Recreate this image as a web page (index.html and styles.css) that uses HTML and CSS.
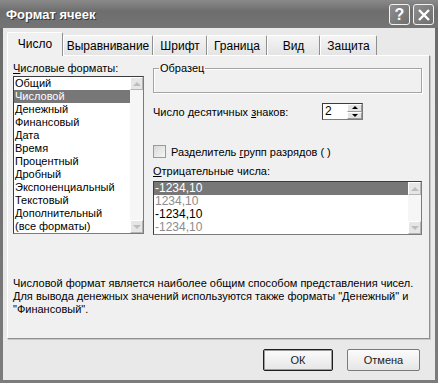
FILE: index.html
```html
<!DOCTYPE html>
<html lang="ru">
<head>
    <meta charset="UTF-8">
    <title>Формат ячеек</title>
    <link rel="stylesheet" href="styles.css">
</head>
<body>
    <div class="window">
        <div class="titlebar">
            <span class="title">Формат ячеек</span>
            <div class="title-buttons">
                <span class="tbtn">?</span>
                <span class="tbtn">
                    <svg width="14" height="14" viewBox="0 0 14 14"><path d="M2 2 L12 12 M12 2 L2 12" stroke="#fff" stroke-width="2.4" fill="none"/></svg>
                </span>
            </div>
        </div>
        <div class="dialog-body">
            <div class="tabs">
                <div class="tab active">Число</div>
                <div class="tab w-align">Выравнивание</div>
                <div class="tab w-font">Шрифт</div>
                <div class="tab w-border">Граница</div>
                <div class="tab w-view">Вид</div>
                <div class="tab w-protect">Защита</div>
            </div>
            <div class="panel">
                <div class="columns">
                    <div class="col-left">
                        <div class="label"><u>Ч</u>исловые форматы:</div>
                        <div class="listbox formats">
                            <ul class="items">
                                <li>Общий</li>
                                <li class="selected">Числовой</li>
                                <li>Денежный</li>
                                <li>Финансовый</li>
                                <li>Дата</li>
                                <li>Время</li>
                                <li>Процентный</li>
                                <li>Дробный</li>
                                <li>Экспоненциальный</li>
                                <li>Текстовый</li>
                                <li>Дополнительный</li>
                                <li>(все форматы)</li>
                            </ul>
                            <div class="scrollbar">
                                <span class="sb-btn"><span class="arrow up"></span></span>
                                <span class="sb-track"></span>
                                <span class="sb-btn"><span class="arrow down"></span></span>
                            </div>
                        </div>
                    </div>
                    <div class="col-right">
                        <fieldset class="sample">
                            <legend>Образец</legend>
                        </fieldset>
                        <div class="decimals">
                            <span>Число десятичных <u>з</u>наков:</span>
                            <div class="spin">
                                <span class="spin-value">2</span>
                                <div class="spin-buttons">
                                    <span class="spin-btn"><span class="tri up"></span></span>
                                    <span class="spin-btn"><span class="tri down"></span></span>
                                </div>
                            </div>
                        </div>
                        <div class="check-row">
                            <span class="checkbox"></span>
                            <span>Разделитель <u>г</u>рупп разрядов ( )</span>
                        </div>
                        <div class="label neg-label"><u>О</u>трицательные числа:</div>
                        <div class="listbox negatives">
                            <ul class="items">
                                <li class="selected">-1234,10</li>
                                <li class="dim">1234,10</li>
                                <li>-1234,10</li>
                                <li class="dim">-1234,10</li>
                            </ul>
                            <div class="scrollbar">
                                <span class="sb-btn"><span class="arrow up"></span></span>
                                <span class="sb-track"></span>
                                <span class="sb-btn"><span class="arrow down"></span></span>
                            </div>
                        </div>
                    </div>
                </div>
                <p class="description">Числовой формат является наиболее общим способом представления чисел.<br>Для вывода денежных значений используются также форматы "Денежный" и<br>"Финансовый".</p>
            </div>
            <div class="footer">
                <button class="btn default">ОК</button>
                <button class="btn cancel">Отмена</button>
            </div>
        </div>
    </div>
</body>
</html>
```

FILE: styles.css
```css
* {
    margin: 0;
    padding: 0;
    box-sizing: border-box;
}
body {
    font-family: 'Liberation Sans', Arial, sans-serif;
    font-size: 11px;
    color: #000;
    background: #fff;
}
.window {
    width: 438px;
    height: 383px;
    display: flex;
    flex-direction: column;
    background: linear-gradient(to bottom, #6a6a6a, #7c7c7c);
}
.titlebar {
    height: 28px;
    display: flex;
    align-items: center;
    justify-content: space-between;
    padding: 0 4px 0 6px;
    background: linear-gradient(to bottom, #8a8a8a 0%, #6e6e6e 40%, #747474 100%);
}
.title {
    color: #fff;
    font-weight: 700;
    font-size: 13px;
    text-shadow: 1px 1px 0 #333;
}
.title-buttons {
    display: flex;
    gap: 3px;
    margin-top: 1px;
}
.tbtn {
    width: 21px;
    height: 21px;
    border: 1px solid #f2f2f2;
    border-radius: 3px;
    background: linear-gradient(135deg, #8e8e8e, #6e6e6e);
    color: #fff;
    font-size: 16px;
    font-weight: 700;
    display: flex;
    align-items: center;
    justify-content: center;
}
.dialog-body {
    flex: 1;
    margin: 0 3px 3px;
    background: #e9e9e9;
    padding: 5px 5px 0 4px;
    display: flex;
    flex-direction: column;
}
.tabs {
    display: flex;
    height: 22px;
    align-items: flex-end;
    position: relative;
    z-index: 1;
}
.tab {
    height: 20px;
    border: 1px solid #fff;
    border-bottom: none;
    border-right: 1px solid #8f8f8f;
    border-radius: 2px 2px 0 0;
    background: linear-gradient(to bottom, #f4f4f4, #e4e4e4);
    display: flex;
    align-items: center;
    justify-content: center;
    font-size: 12px;
    padding-top: 1px;
}
.tab.active {
    width: 56px;
    height: 24px;
    margin-bottom: -1px;
    background: #f0f0f0;
    padding-bottom: 2px;
}
.w-align { width: 90px; }
.w-font { width: 54px; }
.w-border { width: 60px; }
.w-view { width: 53px; }
.w-protect { width: 57px; }
.panel {
    height: 284px;
    background: #f0f0f0;
    border: 1px solid #8f8f8f;
    border-top-color: #fff;
    border-left-color: #fff;
    box-shadow: 1px 1px 0 #c8c8c8;
    padding: 6px 7px 0 5px;
    display: flex;
    flex-direction: column;
}
.columns {
    display: flex;
    gap: 9px;
}
.col-left {
    width: 132px;
}
.col-right {
    width: 269px;
    display: flex;
    flex-direction: column;
}
.label {
    height: 13px;
    line-height: 13px;
}
.listbox {
    display: flex;
    background: #fff;
    border: 1px solid #7b7b7b;
    border-top-color: #3c3c3c;
    border-left-color: #3c3c3c;
}
.formats {
    margin-top: 1px;
    height: 158px;
}
.items {
    list-style: none;
    flex: 1;
}
.items li {
    height: 13px;
    line-height: 13px;
    padding-left: 1px;
    white-space: nowrap;
}
.items li.selected {
    background: #777;
    color: #fff;
}
.items li.dim {
    color: #8c8c8c;
}
.scrollbar {
    width: 13px;
    display: flex;
    flex-direction: column;
    background: #f6f6f6;
}
.sb-track {
    flex: 1;
}
.sb-btn {
    height: 13px;
    background: #e6e6e6;
    border: 1px solid #fff;
    border-right-color: #b4b4b4;
    border-bottom-color: #b4b4b4;
    display: flex;
    align-items: center;
    justify-content: center;
}
.arrow {
    width: 0;
    height: 0;
    border-left: 4px solid transparent;
    border-right: 4px solid transparent;
}
.arrow.up {
    border-bottom: 4px solid #bdbdbd;
}
.arrow.down {
    border-top: 4px solid #bdbdbd;
}
.sample {
    height: 31px;
    border: 1px solid #a4a4a4;
    box-shadow: inset 1px 1px 0 #fff, 1px 1px 0 #fff;
    padding: 0 4px;
}
.sample legend {
    margin-left: 1px;
    padding: 0 1px;
    line-height: 13px;
}
.decimals {
    margin-top: 10px;
    height: 17px;
    display: flex;
    align-items: center;
}
.decimals > span {
    width: 169px;
}
.spin {
    width: 41px;
    height: 17px;
    display: flex;
    background: #fff;
    border: 1px solid #7b7b7b;
    border-top-color: #3c3c3c;
    border-left-color: #3c3c3c;
}
.spin-value {
    flex: 1;
    padding-left: 2px;
    line-height: 15px;
    font-size: 12px;
}
.spin-buttons {
    width: 15px;
    display: flex;
    flex-direction: column;
}
.spin-btn {
    flex: 1;
    background: #e4e4e4;
    border: 1px solid #fff;
    border-right-color: #9a9a9a;
    border-bottom-color: #9a9a9a;
    display: flex;
    align-items: center;
    justify-content: center;
}
.tri {
    width: 0;
    height: 0;
    border-left: 3px solid transparent;
    border-right: 3px solid transparent;
}
.tri.up {
    border-bottom: 3px solid #000;
}
.tri.down {
    border-top: 3px solid #000;
}
.check-row {
    margin-top: 25px;
    height: 13px;
    display: flex;
    align-items: center;
    gap: 5px;
}
.checkbox {
    width: 13px;
    height: 13px;
    border: 1px solid #9a9a9a;
    background: linear-gradient(135deg, #d8d8d8, #f6f6f6);
}
.neg-label {
    margin-top: 7px;
}
.negatives {
    margin-top: 3px;
    height: 54px;
    width: 269px;
}
.negatives .items li {
    font-size: 12px;
}
.description {
    margin-top: auto;
    margin-bottom: 22px;
    line-height: 13px;
    font-size: 11px;
}
.footer {
    display: flex;
    justify-content: flex-end;
    gap: 14px;
    padding: 10px 10px 0 0;
}
.btn {
    height: 22px;
    font-family: inherit;
    font-size: 11px;
    color: #222;
    background: linear-gradient(to bottom, #fbfbfb, #e6e6e6);
    border: 1px solid #7a7a7a;
    border-radius: 2px;
}
.btn.default {
    width: 70px;
    border-color: #1e1e1e;
    box-shadow: inset 0 0 0 1px #9c9c9c;
}
.btn.cancel {
    width: 73px;
}
```
